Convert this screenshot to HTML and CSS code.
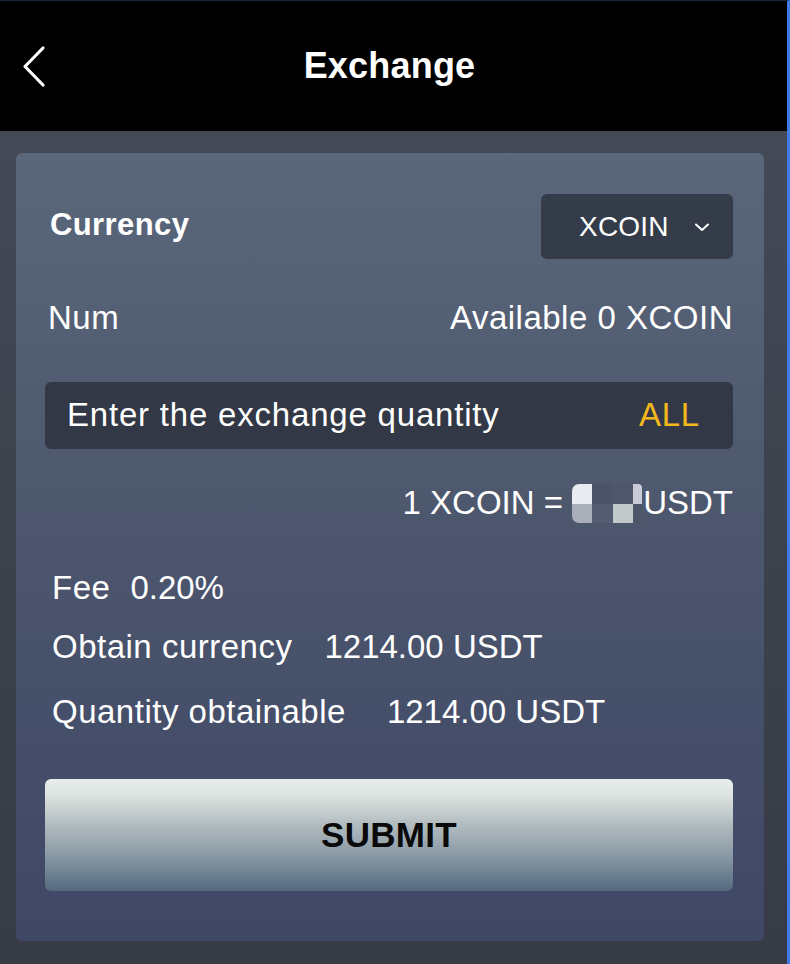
FILE: index.html
```html
<!DOCTYPE html>
<html lang="en">
<head>
<meta charset="utf-8">
<title>Exchange</title>
<link rel="stylesheet" href="styles.css">
</head>
<body>
<div class="app">
  <header class="topbar">
    <div class="back">
      <svg width="26" height="44" viewBox="0 0 26 44" aria-hidden="true">
        <polyline points="21,3 3,21.5 21,40" fill="none" stroke="#ffffff" stroke-width="3.2" stroke-linecap="round" stroke-linejoin="round"/>
      </svg>
    </div>
    <h1 class="title">Exchange</h1>
    <div></div>
  </header>
  <main class="main">
    <section class="card">
      <div class="row row-currency">
        <span class="label-strong">Currency</span>
        <div class="select">
          <span>XCOIN</span>
          <svg width="16" height="9" viewBox="0 0 16 9" aria-hidden="true">
            <polyline points="2,1.5 8,7 14,1.5" fill="none" stroke="#ffffff" stroke-width="2" stroke-linecap="round" stroke-linejoin="round"/>
          </svg>
        </div>
      </div>
      <div class="row row-num">
        <span>Num</span>
        <span>Available 0 XCOIN</span>
      </div>
      <div class="input">
        <span class="placeholder">Enter the exchange quantity</span>
        <span class="all">ALL</span>
      </div>
      <div class="rate">
        <span>1 XCOIN =&nbsp;</span>
        <span class="mosaic" aria-hidden="true">
          <i class="m1"></i><i class="m2"></i><i class="m3"></i><i class="m4"></i>
          <i class="m5"></i><i class="m6"></i><i class="m7"></i><i class="m8"></i>
        </span>
        <span>USDT</span>
      </div>
      <div class="info info-fee"><span>Fee</span><span class="val">0.20%</span></div>
      <div class="info info-obtain"><span>Obtain currency</span><span class="val">1214.00 USDT</span></div>
      <div class="info info-qty"><span>Quantity obtainable</span><span class="val">1214.00 USDT</span></div>
      <button class="submit" type="button">SUBMIT</button>
    </section>
  </main>
</div>
</body>
</html>
```

FILE: styles.css
```css
* { box-sizing: border-box; }

html, body {
  margin: 0;
  padding: 0;
  background: #363b46;
}

body {
  font-family: "Liberation Sans", Arial, sans-serif;
  color: #ffffff;
}

.app {
  width: 790px;
  min-height: 964px;
  border-right: 3px solid #3d7be6;
  border-top: 1px solid #1a2640;
  display: flex;
  flex-direction: column;
  background: linear-gradient(180deg, #474d58 0%, #3f4550 40%, #363b45 100%);
}

.topbar {
  height: 130px;
  background: #000000;
  display: grid;
  grid-template-columns: 1fr auto 1fr;
  align-items: center;
}

.back {
  padding-left: 22px;
  padding-top: 2px;
  display: flex;
  align-items: center;
}

.title {
  margin: 0;
  font-size: 36px;
  font-weight: 700;
  letter-spacing: 0.2px;
  transform: translateX(-4px);
}

.main {
  flex: 1;
  padding: 22px 23px 23px 16px;
  display: flex;
}

.card {
  flex: 1;
  border-radius: 6px;
  background: linear-gradient(180deg, #5a677b 0%, #4d576d 45%, #3f4766 100%);
  padding: 41px 31px 50px 29px;
  display: flex;
  flex-direction: column;
  font-size: 33px;
  letter-spacing: 0.5px;
}

.row {
  display: flex;
  justify-content: space-between;
  align-items: center;
}

.row-currency {
  padding-left: 5px;
}

.label-strong {
  font-size: 31px;
  font-weight: 700;
  letter-spacing: 0.4px;
  margin-top: -4px;
}

.select {
  width: 192px;
  height: 65px;
  border-radius: 6px;
  background: #353c49;
  display: flex;
  align-items: center;
  padding-left: 38px;
  gap: 25px;
  font-size: 28px;
  letter-spacing: 0.2px;
}

.select svg {
  margin-top: 1px;
}

.row-num {
  margin-top: 39px;
  height: 40px;
  padding-left: 3px;
}

.input {
  margin-top: 44px;
  height: 67px;
  border-radius: 6px;
  background: #323845;
  display: flex;
  justify-content: space-between;
  align-items: center;
  padding: 0 33px 2px 22px;
  letter-spacing: 0.8px;
}

.all {
  color: #f4b81f;
}

.rate {
  margin-top: 34px;
  height: 40px;
  display: flex;
  justify-content: flex-end;
  align-items: center;
  letter-spacing: 0;
}

.mosaic {
  display: grid;
  grid-template-columns: 20px 21px 20px 9px;
  grid-template-rows: 20px 19px;
  margin-right: 1px;
}

.mosaic i { display: block; }
.m1 { background: #e9ebf1; border-top-left-radius: 7px; }
.m2 { background: #4b5367; }
.m3 { background: #4e566a; }
.m4 { background: #c9ccd6; border-top-right-radius: 4px; }
.m5 { background: #a9aeb9; border-bottom-left-radius: 7px; }
.m6 { background: #545c71; }
.m7 { background: #c2c9c9; }
.m8 { background: #4d5569; }

.info {
  display: flex;
  align-items: center;
  height: 40px;
  padding-left: 7px;
}

.info .val {
  letter-spacing: 0;
}

.info-fee { margin-top: 45px; gap: 20px; }
.info-obtain { margin-top: 19px; gap: 32px; }
.info-qty { margin-top: 25px; gap: 41px; }

.submit {
  margin-top: 47px;
  height: 112px;
  border: none;
  border-radius: 6px;
  background: linear-gradient(180deg, #e8eee9 0%, #dde3e0 14%, #b3bdc1 40%, #8a99a5 68%, #546b7f 100%);
  font-family: "Liberation Sans", Arial, sans-serif;
  font-size: 35px;
  font-weight: 700;
  color: #0a0a0a;
  letter-spacing: 0.3px;
  padding: 0;
}
```
